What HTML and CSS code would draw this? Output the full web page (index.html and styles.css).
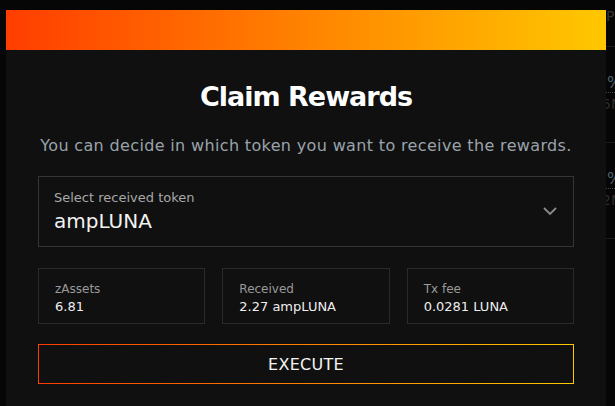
FILE: index.html
```html
<!DOCTYPE html>
<html>
<head>
<meta charset="utf-8">
<link rel="stylesheet" href="styles.css">
</head>
<body>
<div class="page">
  <div class="bg-col">
    <div class="bg-head">Pr</div>
    <div class="bg-row">
      <div class="bg-pct">%</div>
      <div class="bg-sub">5M</div>
    </div>
    <div class="bg-row">
      <div class="bg-pct">%</div>
      <div class="bg-sub">2M</div>
    </div>
  </div>
</div>

<div class="modal">
  <div class="modal-bar"></div>
  <div class="modal-body">
    <h1 class="title">Claim Rewards</h1>
    <p class="subtitle">You can decide in which token you want to receive the rewards.</p>

    <div class="select">
      <div class="select-text">
        <div class="select-label">Select received token</div>
        <div class="select-value">ampLUNA</div>
      </div>
      <svg class="chevron" width="14" height="8" viewBox="0 0 14 8"><path d="M1 1 L7 7 L13 1" fill="none" stroke="#8a8a8a" stroke-width="1.8"/></svg>
    </div>

    <div class="stats">
      <div class="stat">
        <div class="stat-label">zAssets</div>
        <div class="stat-value">6.81</div>
      </div>
      <div class="stat">
        <div class="stat-label">Received</div>
        <div class="stat-value">2.27 ampLUNA</div>
      </div>
      <div class="stat">
        <div class="stat-label">Tx fee</div>
        <div class="stat-value">0.0281 LUNA</div>
      </div>
    </div>

    <button class="execute">EXECUTE</button>
  </div>
</div>
</body>
</html>
```
FILE: styles.css
```css
* { box-sizing: border-box; }
html, body { margin: 0; padding: 0; }
body {
  width: 615px;
  height: 406px;
  overflow: hidden;
  background: #060606;
  font-family: "DejaVu Sans", "Noto Sans", sans-serif;
  position: relative;
}
.page {
  display: flex;
  justify-content: flex-end;
  height: 100%;
}
.bg-col {
  width: 9px;
  font-size: 14px;
  white-space: nowrap;
}
.bg-head {
  height: 47px;
  padding-top: 8px;
  color: #333;
  border-bottom: 1px solid #1c1c1c;
}
.bg-row {
  height: 96px;
  padding-top: 26px;
  border-bottom: 1px solid #1c1c1c;
}
.bg-pct {
  border-bottom: 1px dotted #444;
  color: #4d6070;
  font-size: 16px;
  padding-left: 1px;
}
.bg-sub { color: #2c2c2c; margin-top: 3px; margin-left: -4px; }

.modal {
  position: absolute;
  left: 6px;
  top: 10px;
  width: 600px;
  height: 420px;
  background: #101010;
}
.modal-bar {
  height: 40px;
  background: linear-gradient(90deg, #ff3d00 0%, #ff8a00 55%, #ffc800 100%);
}
.modal-body {
  padding: 0 32px;
  display: flex;
  flex-direction: column;
}
.title {
  margin: 29px 0 0;
  text-align: center;
  color: #ffffff;
  font-size: 27px;
  font-weight: bold;
  line-height: 36px;
  letter-spacing: -1px;
}
.subtitle {
  margin: 19px 0 0;
  text-align: center;
  color: #9aa3ab;
  font-size: 16px;
  line-height: 24px;
  letter-spacing: 0.35px;
}
.select {
  margin-top: 18px;
  height: 71px;
  border: 1px solid #353535;
  display: flex;
  align-items: center;
  justify-content: space-between;
  padding: 0 16px 0 15px;
}
.select-label {
  color: #a8a8a8;
  font-size: 13px;
  line-height: 16px;
}
.select-value {
  color: #f2f2f2;
  font-size: 20px;
  line-height: 26px;
  margin-top: 2px;
}
.chevron { display: block; margin-top: -2px; }
.stats {
  margin-top: 21px;
  display: grid;
  grid-template-columns: 1fr 1fr 1fr;
  gap: 17px;
}
.stat {
  height: 56px;
  border: 1px solid #2a2a2a;
  padding: 12px 16px 0;
}
.stat-label {
  color: #9a9a9a;
  font-size: 12px;
  line-height: 17px;
}
.stat-value {
  color: #eeeeee;
  font-size: 13px;
  line-height: 20px;
  margin-top: -1px;
}
.execute {
  margin-top: 20px;
  height: 40px;
  width: 100%;
  background: transparent;
  border: 1px solid;
  border-image: linear-gradient(90deg, #ff3d00, #ffc800) 1;
  color: #f4f4f4;
  font-family: inherit;
  font-size: 16px;
  letter-spacing: 0.3px;
}
```
